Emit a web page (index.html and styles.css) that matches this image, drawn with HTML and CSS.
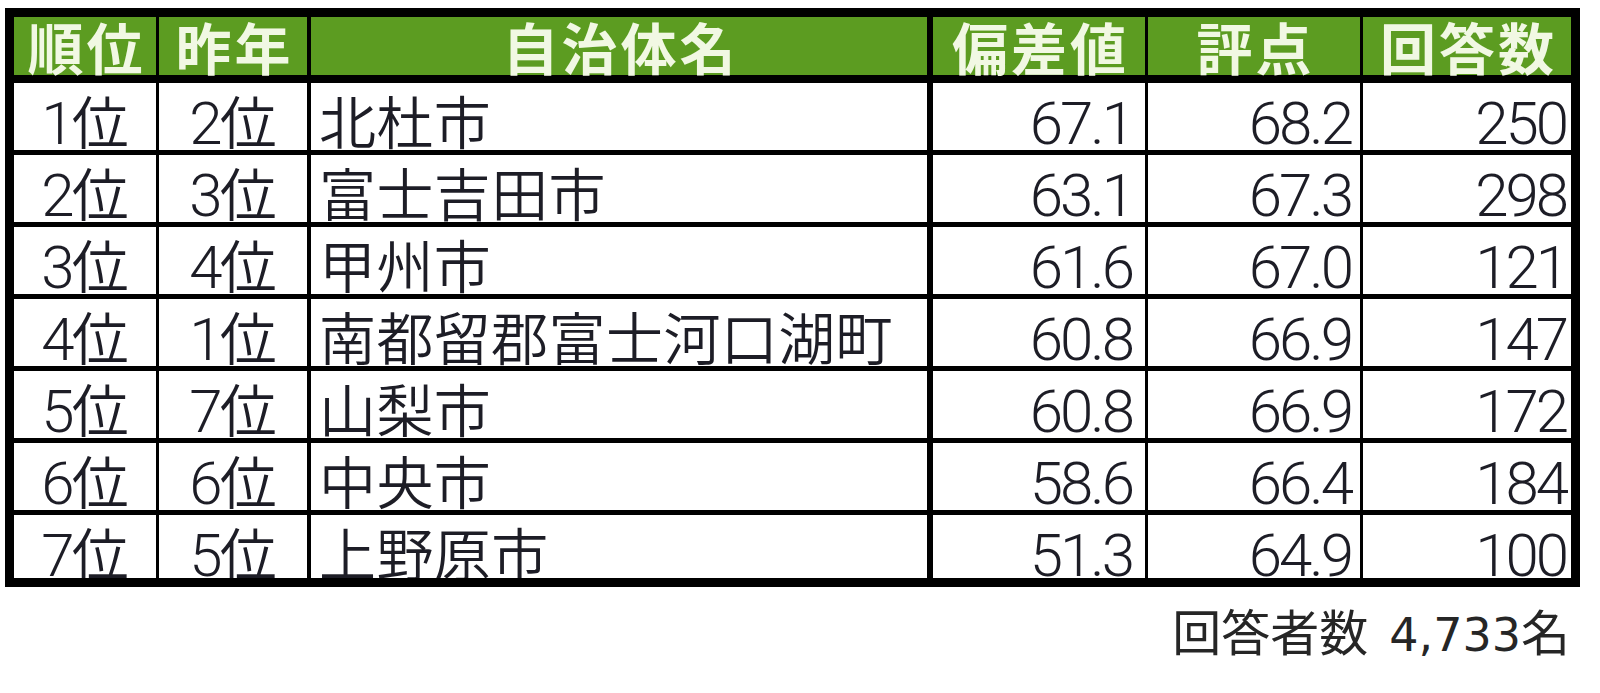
FILE: index.html
```html
<!DOCTYPE html>
<html lang="ja">
<head>
<meta charset="utf-8">
<title>ランキング</title>
<link rel="stylesheet" href="styles.css">
</head>
<body>
<div class="page">
  <div class="table">
    <div class="row head">
      <div class="cell c1">順位</div>
      <div class="cell c2">昨年</div>
      <div class="cell c3">自治体名</div>
      <div class="cell c4">偏差値</div>
      <div class="cell c5">評点</div>
      <div class="cell c6">回答数</div>
    </div>
    <div class="row">
      <div class="cell c1"><span class="n">1</span>位</div><div class="cell c2"><span class="n">2</span>位</div><div class="cell c3">北杜市</div>
      <div class="cell c4"><span class="n">67.1</span></div><div class="cell c5"><span class="n">68.2</span></div><div class="cell c6"><span class="n">250</span></div>
    </div>
    <div class="row">
      <div class="cell c1"><span class="n">2</span>位</div><div class="cell c2"><span class="n">3</span>位</div><div class="cell c3">富士吉田市</div>
      <div class="cell c4"><span class="n">63.1</span></div><div class="cell c5"><span class="n">67.3</span></div><div class="cell c6"><span class="n">298</span></div>
    </div>
    <div class="row">
      <div class="cell c1"><span class="n">3</span>位</div><div class="cell c2"><span class="n">4</span>位</div><div class="cell c3">甲州市</div>
      <div class="cell c4"><span class="n">61.6</span></div><div class="cell c5"><span class="n">67.0</span></div><div class="cell c6"><span class="n">121</span></div>
    </div>
    <div class="row">
      <div class="cell c1"><span class="n">4</span>位</div><div class="cell c2"><span class="n">1</span>位</div><div class="cell c3">南都留郡富士河口湖町</div>
      <div class="cell c4"><span class="n">60.8</span></div><div class="cell c5"><span class="n">66.9</span></div><div class="cell c6"><span class="n">147</span></div>
    </div>
    <div class="row">
      <div class="cell c1"><span class="n">5</span>位</div><div class="cell c2"><span class="n">7</span>位</div><div class="cell c3">山梨市</div>
      <div class="cell c4"><span class="n">60.8</span></div><div class="cell c5"><span class="n">66.9</span></div><div class="cell c6"><span class="n">172</span></div>
    </div>
    <div class="row">
      <div class="cell c1"><span class="n">6</span>位</div><div class="cell c2"><span class="n">6</span>位</div><div class="cell c3">中央市</div>
      <div class="cell c4"><span class="n">58.6</span></div><div class="cell c5"><span class="n">66.4</span></div><div class="cell c6"><span class="n">184</span></div>
    </div>
    <div class="row last">
      <div class="cell c1"><span class="n">7</span>位</div><div class="cell c2"><span class="n">5</span>位</div><div class="cell c3">上野原市</div>
      <div class="cell c4"><span class="n">51.3</span></div><div class="cell c5"><span class="n">64.9</span></div><div class="cell c6"><span class="n">100</span></div>
    </div>
  </div>
  <div class="note">回答者数 <span class="num">4,733</span>名</div>
</div>
</body>
</html>
```

FILE: styles.css
```css
* {
  box-sizing: border-box;
}

html, body {
  margin: 0;
  padding: 0;
  background: #ffffff;
}

.page {
  padding: 8px 0 0 5px;
  width: 1600px;
  height: 693px;
  overflow: hidden;
}

.table {
  width: 1575px;
  border: 9px solid #000;
  background: #fff;
}

.row {
  display: grid;
  grid-template-columns: 145px 152px 622px 215px 215px 208px;
  height: 72px;
  border-bottom: 5px solid #000;
  font-family: "Noto Sans CJK JP", sans-serif;
  font-weight: 350;
  font-size: 57px;
  line-height: 57px;
  color: #1d1d26;
}

.row.last {
  height: 63px;
  border-bottom: none;
  overflow: hidden;
}

.row.head {
  height: 66px;
  border-bottom: 8px solid #000;
  background: #5c9c21;
}

.cell {
  border-right: 3px solid #000;
  white-space: nowrap;
  padding-top: 8px;
}

.n {
  font-family: "Roboto", "Liberation Sans", sans-serif;
  font-weight: 300;
  font-size: 60px;
  line-height: 0;
  letter-spacing: -3px;
}

.c2 {
  border-right-width: 4px;
}

.c3 {
  border-right-width: 6px;
}

.c6 {
  border-right: none;
}

.c1, .c2 {
  text-align: center;
}

.c3 {
  padding-left: 8px;
  letter-spacing: 0.4px;
}

.c4 {
  text-align: right;
  padding-right: 13px;
}

.c5 {
  text-align: right;
  padding-right: 9px;
}

.c6 {
  text-align: right;
  padding-right: 5px;
}

.head .cell {
  display: flex;
  align-items: center;
  justify-content: center;
  padding: 0 0 0 3px;
  font-family: "Noto Sans CJK JP", sans-serif;
  font-weight: 700;
  font-size: 56px;
  line-height: 56px;
  letter-spacing: 3px;
  color: #f1f8e3;
}

.note {
  margin-top: 18px;
  padding-right: 30px;
  text-align: right;
  font-family: "Noto Sans CJK JP", sans-serif;
  font-size: 49px;
  line-height: 1;
  color: #262626;
}

.note .num {
  font-family: "DejaVu Sans", "Noto Sans CJK JP", sans-serif;
  font-size: 46px;
  margin-left: 10px;
}
```
